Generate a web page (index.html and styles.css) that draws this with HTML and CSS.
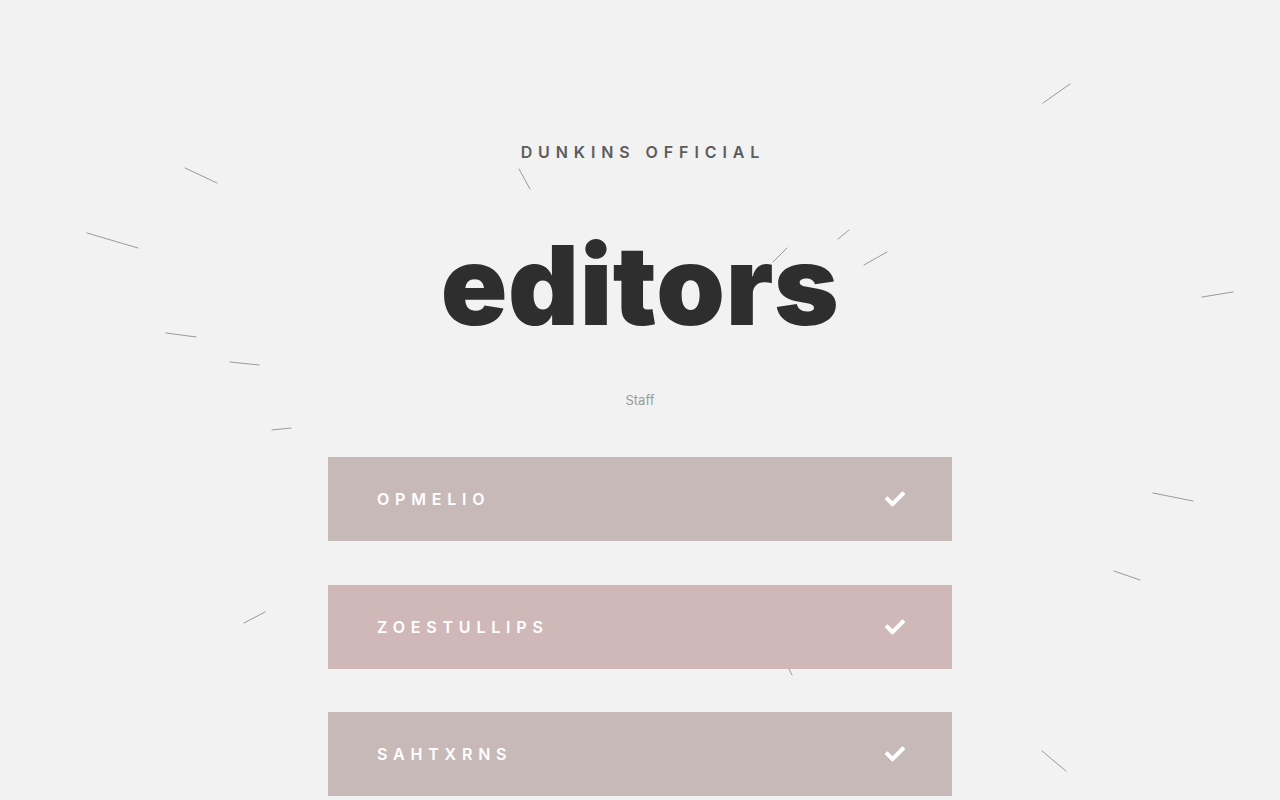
FILE: index.html
```html
<!DOCTYPE html>
<html lang="en">
<head>
<meta charset="utf-8">
<title>Dunkins Official — editors</title>
<link rel="stylesheet" href="styles.css">
</head>
<body>
<div class="page">
  <svg class="strokes" width="1280" height="800" viewBox="0 0 1280 800" aria-hidden="true">
    <g stroke="#9a9a9a" stroke-width="1" stroke-linecap="round">
      <line x1="1043" y1="103" x2="1070" y2="84"/>
      <line x1="185" y1="168" x2="217" y2="183"/>
      <line x1="519" y1="169" x2="530" y2="189"/>
      <line x1="87" y1="233" x2="138" y2="248"/>
      <line x1="838" y1="239" x2="849" y2="230"/>
      <line x1="773" y1="262" x2="787" y2="248"/>
      <line x1="864" y1="265" x2="887" y2="252"/>
      <line x1="1202" y1="297" x2="1233" y2="292"/>
      <line x1="166" y1="333" x2="196" y2="337"/>
      <line x1="230" y1="362" x2="259" y2="365"/>
      <line x1="272" y1="430" x2="291" y2="428"/>
      <line x1="1153" y1="493" x2="1193" y2="501"/>
      <line x1="1114" y1="571" x2="1140" y2="580"/>
      <line x1="244" y1="623" x2="265" y2="612"/>
      <line x1="787" y1="665" x2="792" y2="675"/>
      <line x1="1042" y1="751" x2="1066" y2="771"/>
    </g>
  </svg>
  <main class="content">
    <p class="brand">DUNKINS OFFICIAL</p>
    <h1 class="title">editors</h1>
    <p class="subtitle">Staff</p>
    <ul class="list">
      <li class="item item-a"><span class="name">OPMELIO</span><svg class="check" viewBox="0 0 512 512"><path d="M173.898 439.404l-166.4-166.4c-9.997-9.997-9.997-26.206 0-36.204l36.203-36.204c9.997-9.998 26.207-9.998 36.204 0L192 312.69 432.095 72.596c9.997-9.997 26.207-9.997 36.204 0l36.203 36.204c9.997 9.997 9.997 26.206 0 36.204l-294.4 294.401c-9.998 9.997-26.207 9.997-36.204-.001z"/></svg></li>
      <li class="item item-b"><span class="name">ZOESTULLIPS</span><svg class="check" viewBox="0 0 512 512"><path d="M173.898 439.404l-166.4-166.4c-9.997-9.997-9.997-26.206 0-36.204l36.203-36.204c9.997-9.998 26.207-9.998 36.204 0L192 312.69 432.095 72.596c9.997-9.997 26.207-9.997 36.204 0l36.203 36.204c9.997 9.997 9.997 26.206 0 36.204l-294.4 294.401c-9.998 9.997-26.207 9.997-36.204-.001z"/></svg></li>
      <li class="item item-a"><span class="name">SAHTXRNS</span><svg class="check" viewBox="0 0 512 512"><path d="M173.898 439.404l-166.4-166.4c-9.997-9.997-9.997-26.206 0-36.204l36.203-36.204c9.997-9.998 26.207-9.998 36.204 0L192 312.69 432.095 72.596c9.997-9.997 26.207-9.997 36.204 0l36.203 36.204c9.997 9.997 9.997 26.206 0 36.204l-294.4 294.401c-9.998 9.997-26.207 9.997-36.204-.001z"/></svg></li>
    </ul>
  </main>
</div>
</body>
</html>
```

FILE: styles.css
```css
html, body {
  margin: 0;
  padding: 0;
  background: #f2f2f2;
  height: 100%;
  overflow: hidden;
}
body {
  font-family: Inter, "Noto Sans", "Liberation Sans", sans-serif;
  color: #2e2e2e;
}
.page {
  position: relative;
  width: 1280px;
  height: 800px;
  overflow: hidden;
}
.strokes {
  position: absolute;
  left: 0;
  top: 0;
  z-index: 0;
}
.content {
  position: relative;
  z-index: 1;
  display: flex;
  flex-direction: column;
  align-items: center;
  padding-top: 142px;
}
.brand {
  margin: 0;
  font-size: 16px;
  line-height: 20px;
  font-weight: 600;
  letter-spacing: 5.9px;
  color: #5c5c5c;
  padding-left: 5.9px;
}
.title {
  margin: 53px 0 0;
  font-size: 110px;
  line-height: 140px;
  font-weight: 900;
  letter-spacing: 0.6px;
  color: #2e2e2e;
}
.subtitle {
  margin: 37px 0 0;
  font-size: 13px;
  line-height: 16px;
  color: #9b9b9b;
}
.list {
  list-style: none;
  margin: 49px 0 0;
  padding: 0;
  width: 624px;
  display: flex;
  flex-direction: column;
  gap: 43.5px;
}
.item {
  height: 84px;
  display: flex;
  align-items: center;
  justify-content: space-between;
  padding: 0 47px 0 49px;
}
.item-a { background: #c8b9b9; }
.item-b { background: #d0b8b8; }
.name {
  font-size: 16px;
  font-weight: 600;
  letter-spacing: 5.8px;
  color: #ffffff;
}
.check {
  width: 20px;
  height: 20px;
  fill: #ffffff;
}
```
